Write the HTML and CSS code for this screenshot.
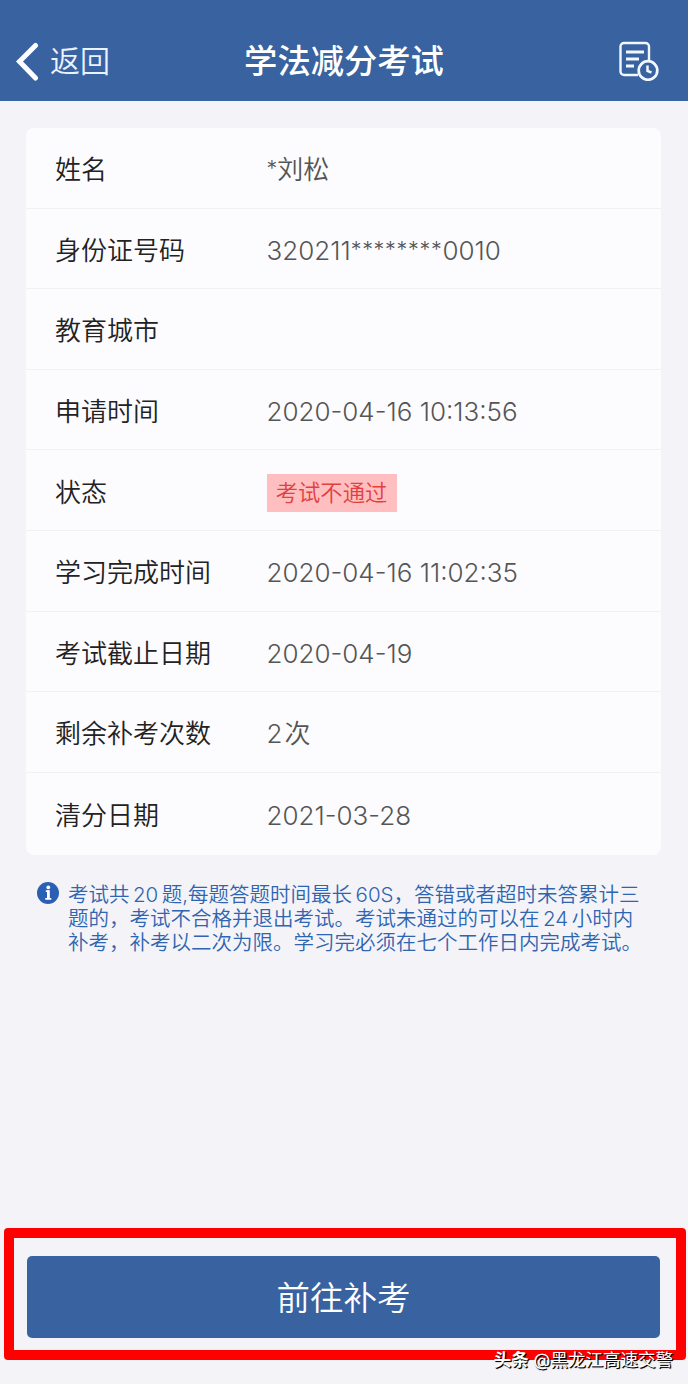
FILE: index.html
```
<!DOCTYPE html>
<html lang="zh-CN">
<head>
  <meta charset="UTF-8">
  <meta name="viewport" content="width=device-width, initial-scale=1.0">
  <title>学法减分考试</title>
  <link rel="stylesheet" href="styles.css">
</head>
<body>
  <div class="page">
    <!-- Header -->
    <header class="header">
      <a class="back" href="#">
        <svg class="back-icon" width="24" height="40" viewBox="0 0 24 40">
          <path d="M20.500 4.500L4.500 20.500L20.500 37" fill="none" stroke="#fff" stroke-width="5" stroke-linecap="round" stroke-linejoin="miter"/>
        </svg>
        <span>返回</span>
      </a>
      <h1 class="title">学法减分考试</h1>
      <a class="record" href="#">
        <svg width="40" height="40" viewBox="0 0 40 40" fill="none" stroke="#f2f8ff" stroke-width="2.4">
          <path d="M19 34H5a3.500 3.500 0 0 1-3.500-3.500V5.500A3.500 3.500 0 0 1 5 2h21.500A3.500 3.500 0 0 1 30 5.500V19"/>
          <path d="M7 11h18M7 18h13M7 25h8" stroke-width="2.800"/>
          <circle cx="29" cy="29.500" r="9.300" stroke-width="2.700"/>
          <path d="M28.500 24.500v5.500l4 1.500" stroke-width="2.500"/>
        </svg>
      </a>
    </header>

    <!-- Exam info -->
    <div class="card">
      <div class="row"><span class="label">姓名</span><span class="value"><span class="star">*</span>刘松</span></div>
      <div class="row"><span class="label">身份证号码</span><span class="value">320211<span class="star star-id">********</span>0010</span></div>
      <div class="row"><span class="label">教育城市</span><span class="value"></span></div>
      <div class="row"><span class="label">申请时间</span><span class="value">2020-04-16 10:13:56</span></div>
      <div class="row"><span class="label">状态</span><span class="tag">考试不通过</span></div>
      <div class="row"><span class="label">学习完成时间</span><span class="value">2020-04-16 11:02:35</span></div>
      <div class="row"><span class="label">考试截止日期</span><span class="value">2020-04-19</span></div>
      <div class="row"><span class="label">剩余补考次数</span><span class="value"><span class="count">2</span>次</span></div>
      <div class="row"><span class="label">清分日期</span><span class="value">2021-03-28</span></div>
    </div>

    <!-- Notice -->
    <div class="notice">
      <svg class="info-icon" width="22" height="22" viewBox="0 0 22 22">
        <circle cx="11" cy="11" r="11" fill="#2b5fb4"/>
        <circle cx="11.300" cy="5.400" r="1.900" fill="#fff"/>
        <path d="M8.800 9.200h2.800v7M8.300 16.800h6" fill="none" stroke="#fff" stroke-width="1.800"/>
        <path d="M11.300 8.300v8" stroke="#fff" stroke-width="2.600"/>
      </svg>
      <p class="notice-text">
        考试共<span class="num">20</span>题,每题答题时间最长<span class="num num-tight">60S</span>，答错或者超时未答累计三<br>
        题的，考试不合格并退出考试。考试未通过的可以在<span class="num">24</span>小时内<br>
        补考，补考以二次为限。学习完必须在七个工作日内完成考试。
      </p>
    </div>

    <!-- Bottom button -->
    <div class="action">
      <button class="btn" type="button">前往补考</button>
    </div>

    <div class="watermark"><b>头条</b> @黑龙江高速交警</div>
  </div>
</body>
</html>
```
FILE: styles.css
```
* {
  box-sizing: border-box;
}

body {
  margin: 0;
  background-color: #f4f4f8;
  font-family: Inter, "Noto Sans CJK SC", sans-serif;
  font-weight: 350;
}

.page {
  position: relative;
  display: flex;
  flex-direction: column;
  height: 1384px;
  overflow: hidden;
}

.header {
  display: grid;
  grid-template-columns: 1fr auto 1fr;
  align-items: center;
  height: 101px;
  padding: 20px 15px 0;
  background-color: #3962a1;
  color: #fff;
}

.back {
  display: flex;
  align-items: center;
  gap: 11px;
  color: #e9f2ff;
  font-size: 30px;
  line-height: 40px;
  text-decoration: none;
}

.title {
  margin: 0;
  font-size: 33.3px;
  font-weight: 500;
  line-height: 40px;
}

.record {
  display: flex;
  justify-content: flex-end;
  margin-right: 14px;
}

.card {
  height: 727px;
  margin: 27px 27px 0 26px;
  border-radius: 8px;
  background-color: #fcfbfe;
}

.row {
  display: flex;
  align-items: center;
  height: 80.6px;
  padding: 5px 30px 0 29px;
  border-bottom: 1px solid #f1f0f3;
  font-size: 26px;
  line-height: 36px;
}

.row:last-child {
  border-bottom: none;
}

.label {
  width: 211.500px;
  color: #222;
}

.value {
  color: #555;
  font-weight: 350;
  white-space: nowrap;
}

.star {
  font-size: 21.5px;
  line-height: 1;
  vertical-align: 3px;
}

.star-id {
  letter-spacing: 0.7px;
}

.count {
  margin-right: 2px;
}

.tag {
  width: 130px;
  height: 38px;
  background-color: #ffbfc0;
  color: #e2403f;
  font-size: 22.3px;
  line-height: 37px;
  text-align: center;
}

.notice {
  display: flex;
  gap: 9px;
  margin: 27px 20px 0 37px;
  color: #2f65b0;
}

.info-icon {
  flex: none;
}

.notice-text {
  margin: 1px 0 0;
  font-size: 20.5px;
  line-height: 24px;
  white-space: nowrap;
}

.num {
  margin: 0 3.5px;
}

.num-tight {
  margin-right: 0;
}

.action {
  height: 132px;
  margin: auto 2px 24px 4px;
  padding: 18px 16px 12px 13px;
  border: 10px solid #fe0000;
  border-radius: 4px;
}

.btn {
  display: block;
  width: 100%;
  height: 82px;
  padding: 0 0 4px;
  border: none;
  border-radius: 5px;
  background-color: #3962a1;
  color: #fff;
  font-family: inherit;
  font-size: 33.5px;
  font-weight: 350;
  cursor: pointer;
}

/* sits over the lower edge of the action frame */
.watermark {
  position: absolute;
  right: 15px;
  bottom: 11px;
  color: #fff;
  font-size: 17.5px;
  font-weight: 400;
  line-height: 26px;
  text-shadow: 1px 1px 1px #000, 1px 1px 0 #222;
  white-space: nowrap;
}
```
